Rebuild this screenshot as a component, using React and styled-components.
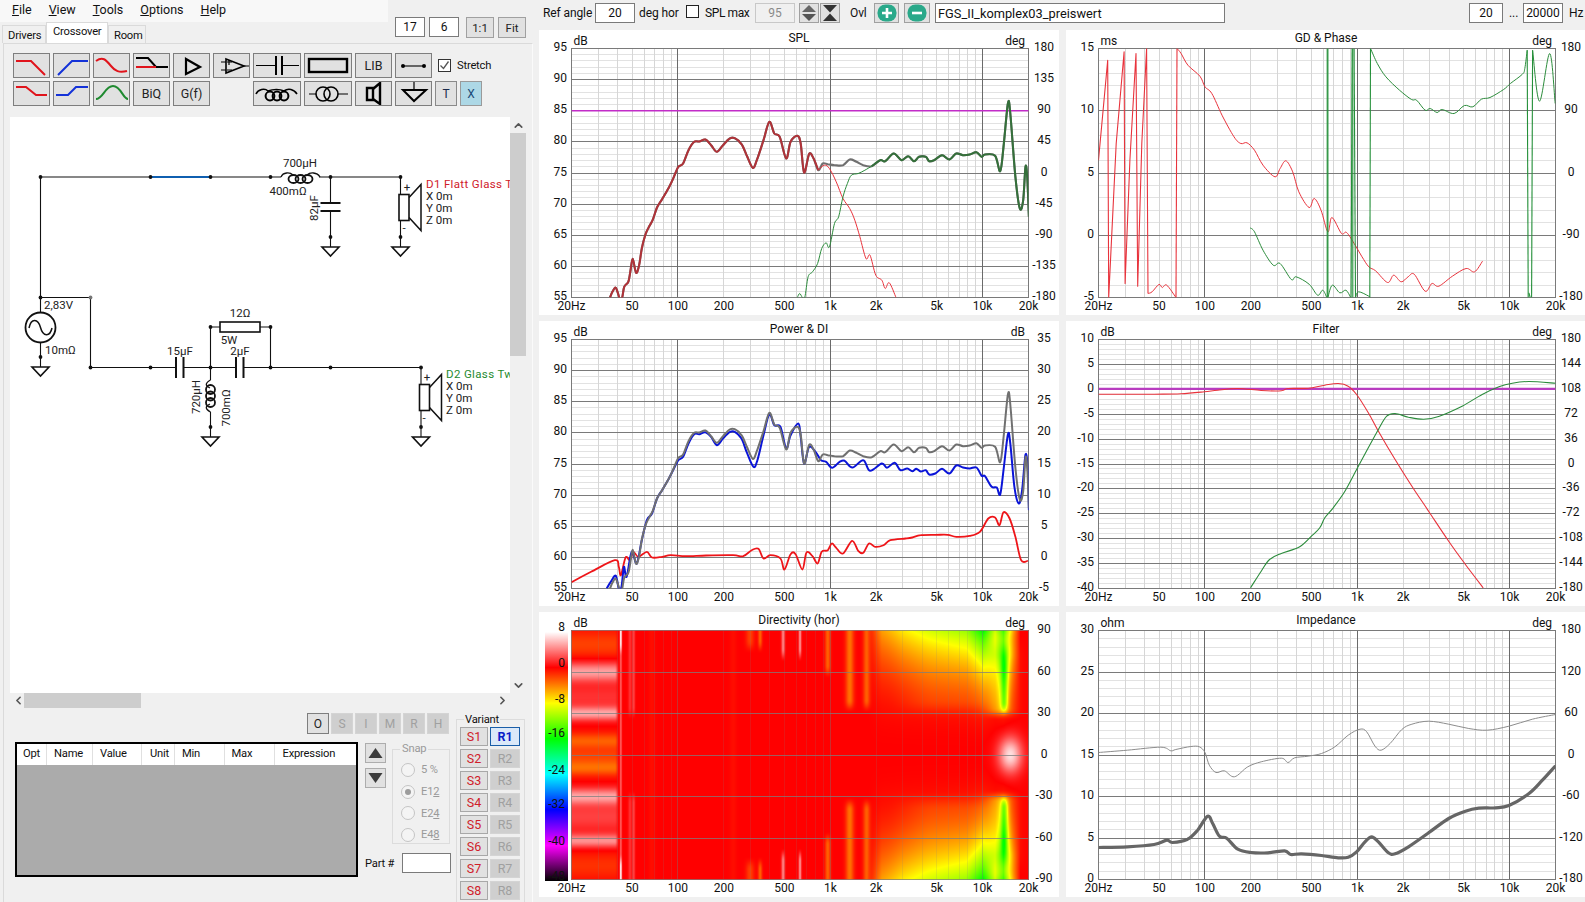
import React, { useEffect, useRef } from "react";
import styled, { createGlobalStyle } from "styled-components";
import { ChevronUp, ChevronDown, ChevronLeft, ChevronRight } from "lucide-react";

const FONT = `Roboto, "Liberation Sans", sans-serif`;

const Global = createGlobalStyle`
  html, body { margin: 0; padding: 0; background: #f0f0f0; }
  body { font-family: ${FONT}; font-size: 12px; color: #111; }
  * { box-sizing: border-box; }
`;

const Page = styled.div`
  width: 1585px; height: 902px; display: flex; overflow: hidden; background: #f0f0f0;
`;

/* ---------- left pane ---------- */
const LeftPane = styled.div`
  width: 533px; flex: none; display: flex; flex-direction: column; height: 902px;
`;
const Header = styled.div`
  height: 43px; display: flex; flex: none;
`;
const HeaderLeft = styled.div`
  width: 395px; flex: none; display: flex; flex-direction: column;
`;
const MenuBar = styled.div`
  width: 388px; height: 22px; background: #f8f8f8; display: flex; align-items: center; padding-left: 12px; gap: 17px; padding-bottom: 4px;
`;
const MenuItem = styled.span`
  font-size: 12.5px; color: #111; & u { text-decoration: underline; }
`;
const Tabs = styled.div`
  display: flex; align-items: flex-end; height: 21px; padding-left: 2px;
`;
const Tab = styled.div`
  height: ${(p) => (p.$active ? "21px" : "18px")};
  padding: ${(p) => (p.$active ? "2px 6px 0" : "3px 5px 0")};
  width: ${(p) => p.$w}px;
  background: ${(p) => (p.$active ? "#fff" : "#f0f0f0")};
  border: 1px solid #dadada; border-bottom: none; font-size: 11.2px; letter-spacing: -0.2px; white-space: nowrap;
`;
const ZoomTools = styled.div`
  display: flex; padding-top: 17px; gap: 4px; align-items: flex-start;
`;
const Box = styled.div`
  width: ${(p) => p.$w}px; height: ${(p) => p.$h || 20}px; background: ${(p) => (p.$dim ? "#f0f0f0" : "#fff")};
  border: 1px solid ${(p) => (p.$dim ? "#c8c8c8" : "#7a7a7a")}; display: flex; align-items: center;
  justify-content: ${(p) => (p.$left ? "flex-start" : "center")}; padding-left: ${(p) => (p.$left ? 2 : 0)}px;
  color: ${(p) => (p.$dim ? "#8a8a8a" : "#111")}; font-size: ${(p) => p.$fs || 12}px; flex: none; white-space: nowrap; overflow: hidden;
`;
const SmallBtn = styled.button`
  width: ${(p) => p.$w}px; height: ${(p) => p.$h || 21}px; padding: 0; background: #e1e1e1; border: 1px solid #a0a0a0; margin-left: ${(p) => p.$ml || 0}px;
  font: 11.5px ${FONT}; color: #222; flex: none; display: flex; align-items: center; justify-content: center;
`;
const TabPage = styled.div`
  flex: 1; margin-left: 3px; border: 1px solid #dadada; border-right: 1px solid #fafafa; border-bottom: none; display: flex; flex-direction: column; min-height: 0;
  font-size: 11.2px; letter-spacing: -0.2px;
`;
const Toolbar = styled.div`
  display: grid; grid-template-columns: repeat(6, 37px) 48px 48px 37px 37px auto; grid-auto-rows: 25px; gap: 3px;
  padding: 9px 0 0 9px; flex: none; height: 73px;
`;
const ToolBtn = styled.button`
  grid-column: ${(p) => p.$col || "auto"};
  padding: 0; margin: 0; background: #e1e1e1; border: 1px solid #7e7e7e; display: flex; align-items: center; justify-content: center;
  font: 12.5px ${FONT}; color: #222;
  & svg { display: block; }
`;
const StretchCell = styled.label`
  display: flex; align-items: center; gap: 6px; padding-left: 3px;
`;
const CheckBox = styled.span`
  width: 13px; height: 13px; background: #fff; border: 1px solid #333; display: inline-flex; align-items: center; justify-content: center; flex: none;
`;
const PairCell = styled.div`
  display: flex; gap: 3px;
`;
const TinyBtn = styled.button`
  width: 22px; height: 25px; padding: 0; border: 1px solid ${(p) => (p.$on ? "#9a9a9a" : "#8a8a8a")}; background: ${(p) => (p.$on ? "#add8e6" : "#e1e1e1")};
  font: 12px ${FONT}; color: ${(p) => (p.$on ? "#1a4a78" : "#1a2a4a")};
`;
const CanvasArea = styled.div`
  display: flex; margin: 0 0 0 6px; height: 576px; flex: none; margin-top: 0;
`;
const Sheet = styled.div`
  width: 500px; height: 576px; background: #fff; overflow: hidden; flex: none;
  & svg { display: block; }
`;
const VBar = styled.div`
  width: 16px; height: 576px; display: flex; flex-direction: column; align-items: center; color: #555;
`;
const ArrowCell = styled.div`
  height: 16px; width: 16px; flex: none; display: flex; align-items: center; justify-content: center; color: #555;
`;
const VThumb = styled.div`
  width: 16px; height: 223px; background: #cdcdcd; flex: none;
`;
const VRest = styled.div`flex: 1;`;
const HBar = styled.div`
  height: 15px; display: flex; align-items: center; width: 500px; margin-left: 6px; flex: none;
`;
const HThumb = styled.div`
  width: 117px; height: 15px; background: #cdcdcd; flex: none; margin-left: -2px;
`;
const Lower = styled.div`
  display: flex; flex: 1; padding-left: 11px; min-height: 0; position: relative;
`;
const LowerMain = styled.div`
  width: 441px; flex: none; display: flex; flex-direction: column;
`;
const ModeRow = styled.div`
  display: flex; justify-content: flex-end; gap: 2px; padding-top: 5px; height: 34px; padding-right: 7px;
`;
const ModeBtn = styled.button`
  width: 22px; height: 21px; padding: 0; background: ${(p) => (p.$on ? "#e1e1e1" : "#cfcfcf")};
  border: 1px solid ${(p) => (p.$on ? "#7e7e7e" : "#d4d4d4")}; font: 12px ${FONT}; color: ${(p) => (p.$on ? "#222" : "#a0a0a0")};
`;
const TableRow = styled.div`
  display: flex; gap: 7px;
`;
const PartsTable = styled.div`
  width: 343px; height: 135px; border: 2px solid #000; background: #ababab; flex: none;
`;
const TableHead = styled.div`
  height: 21px; background: #fff; display: grid; grid-template-columns: 30px 46px 49px 33px 49.5px 50px 1fr;
`;
const HeadCell = styled.div`
  border-right: 1px solid ${(p) => (p.$last ? "transparent" : "#e0e0e0")}; padding: 3px 0 0 ${(p) => p.$pad}px; white-space: nowrap;
`;
const SideCol = styled.div`
  width: 85px; flex: none; display: flex; flex-direction: column;
`;
const SideTop = styled.div`
  display: flex; gap: 6px;
`;
const ArrowCol = styled.div`
  display: flex; flex-direction: column; gap: 5px; width: 21px; padding-top: 1px;
`;
const ArrowBtn = styled.button`
  width: 21px; height: 20px; padding: 0; background: #e1e1e1; border: 1px solid #adadad; display: flex; align-items: center; justify-content: center;
`;
const SnapGroup = styled.fieldset`
  width: 58px; height: 102px; margin: 0; padding: 3px 0 0 8px; border: 1px solid #dcdcdc; min-width: 0;
  & legend { color: #9a9a9a; padding: 0 2px; margin-left: -1px; line-height: 14px; }
`;
const RadioRow = styled.div`
  display: flex; align-items: center; gap: 6px; height: 21.7px; color: #9a9a9a;
`;
const Radio = styled.span`
  width: 14px; height: 14px; border-radius: 50%; border: 1px solid #c4c4c4; background: #f4f4f4; display: flex; align-items: center; justify-content: center; flex: none;
  &::after { content: ""; width: 6px; height: 6px; border-radius: 50%; background: ${(p) => (p.$on ? "#9c9c9c" : "transparent")}; }
`;
const PartRow = styled.div`
  display: flex; align-items: center; gap: 8px; margin-top: 9px; white-space: nowrap; justify-content: space-between;
`;
const VariantGroup = styled.fieldset`
  width: 69px; height: 200px; margin: 5px 0 0 0; padding: 0 4px 0 3px; border: 1px solid #dcdcdc; flex: none; min-width: 0;
  & legend { color: #111; padding: 0 1px; margin-left: 4px; line-height: 13px; }
`;
const VariantGrid = styled.div`
  display: grid; grid-template-columns: 28px 30px; gap: 3px 2px; grid-auto-rows: 19px; margin-top: 1px;
`;
const VarBtn = styled.button`
  padding: 0; font: ${(p) => (p.$sel ? "700" : "400")} 12.5px ${FONT};
  color: ${(p) => (p.$kind === "s" ? "#d0202a" : p.$sel ? "#0a1ec8" : "#a0a0a0")};
  background: ${(p) => (p.$sel ? "#dbe9f9" : p.$kind === "s" ? "#e1e1e1" : "#cfcfcf")};
  border: 1px solid ${(p) => (p.$sel ? "#1a5ea8" : p.$kind === "s" ? "#a8a8a8" : "#d4d4d4")};
`;

/* ---------- right pane ---------- */
const RightPane = styled.div`
  flex: 1; display: flex; flex-direction: column; min-width: 0;
`;
const TopBar = styled.div`
  height: 30px; display: flex; align-items: flex-start; padding: 3px 0 0 10px; flex: none;
`;
const BarLabel = styled.span`
  line-height: 20px; margin-left: ${(p) => p.$ml || 0}px; font-size: 12px; white-space: nowrap; flex: none; width: ${(p) => (p.$w !== undefined ? p.$w + "px" : "auto")};
  letter-spacing: ${(p) => (p.$tight ? "-0.4px" : "-0.1px")};
`;
const BarCheck = styled(CheckBox)`
  margin: 2px 6px 0 0; border-color: #222;
`;
const GridWrap = styled.div`
  display: grid; grid-template-columns: 520px 519px; grid-auto-rows: 285px; column-gap: 7px; row-gap: 6px; margin-left: 6px;
`;
const Panel = styled.div`
  position: relative; background: #fff; width: 100%; height: 285px; overflow: hidden;
  & > svg { display: block; }
`;
const HeatCanvas = styled.canvas`
  position: absolute; left: 32px; top: 18px; width: 458px; height: 250px; display: block;
`;
const AxisText = styled.text`
  font: 12px ${FONT}; fill: #111;
`;
const SchText = styled.text`
  font: 11.5px ${FONT}; fill: ${(p) => p.$color || "#222"}; letter-spacing: ${(p) => (p.$color ? "0.35px" : "0")};
`;

/* ---------- curves ---------- */
const Z4 = (z) => z.map(([x, y]) => [(x - 122) / 2.958, (y - 145) / 3]);
const Z5 = (z) => z.map(([x, y]) => [(x - 143) / 2.93, (y - 145) / 3]);
const Z7 = (z) => z.map(([x, y]) => [(x - 122) / 2.958, (y - 88) / 3]);
const Z8 = (z) => z.map(([x, y]) => [(x - 114) / 2.987, (y - 65) / 3]);
const Z9 = (z) => z.map(([x, y]) => [(x - 114) / 2.987, (y - 61) / 3]);

const smooth = (p) => {
  let d = `M${p[0][0].toFixed(1)} ${p[0][1].toFixed(1)}`;
  for (let i = 0; i < p.length - 1; i++) {
    const a = p[Math.max(i - 1, 0)], b = p[i], c = p[i + 1], e = p[Math.min(i + 2, p.length - 1)];
    const c1 = [b[0] + (c[0] - a[0]) / 6, b[1] + (c[1] - a[1]) / 6];
    const c2 = [c[0] - (e[0] - b[0]) / 6, c[1] - (e[1] - b[1]) / 6];
    d += `C${c1[0].toFixed(1)} ${c1[1].toFixed(1)} ${c2[0].toFixed(1)} ${c2[1].toFixed(1)} ${c[0].toFixed(1)} ${c[1].toFixed(1)}`;
  }
  return d;
};
const poly = (p) => "M" + p.map(([x, y]) => `${x.toFixed(1)} ${y.toFixed(1)}`).join("L");

const SUM = [[236,892],[243,875],[252,862],[258,875],[266,900],[272,892],[278,860],[290,845],[296,815],[303,776],[313,818],[322,795],[330,745],[340,705],[350,682],[362,660],[375,622],[390,597],[410,562],[425,530],[438,500],[452,490],[468,450],[485,425],[500,424],[518,418],[535,435],[552,455],[570,435],[590,415],[605,414],[625,432],[640,465],[658,503],[670,480],[690,420],[707,365],[722,400],[738,410],[757,475],[770,425],[790,407],[800,430],[810,517],[825,461],[838,475],[852,510],[865,490],[880,492],[900,495],[925,495],[945,478],[965,485],[985,495],[1010,498],[1035,480],[1050,483],[1075,460],[1098,480],[1118,468],[1135,483],[1150,470],[1170,470],[1180,483],[1195,480],[1218,465],[1240,478],[1260,460],[1280,465],[1300,463],[1320,456],[1335,470],[1345,463],[1375,467],[1390,513],[1400,440],[1413,310],[1420,340],[1435,530],[1448,625],[1458,600],[1465,500],[1470,530],[1475,650]];
const SUM_LOW = SUM.filter(([x]) => x <= 852);
const SUM_HIGH = SUM.filter(([x]) => x >= 1010);
const RED_THIN = [[852,510],[870,495],[885,505],[905,545],[925,595],[945,625],[960,660],[975,710],[993,775],[1005,765],[1022,825],[1040,840],[1050,865],[1062,848],[1082,892]];
const GREEN_THIN = [[790,892],[797,880],[805,892],[812,892],[822,830],[835,815],[850,790],[862,745],[875,728],[885,740],[900,670],[912,650],[925,590],[938,550],[950,525],[970,520],[990,510],[1010,498]];
const BLUE = [[226,835],[240,812],[253,797],[262,835],[270,830],[277,770],[285,800],[300,725],[315,760],[330,690],[345,630],[360,610],[375,565],[390,540],[410,505],[425,475],[438,450],[452,440],[468,400],[485,372],[500,372],[518,366],[535,380],[552,405],[570,385],[590,366],[605,365],[625,385],[640,425],[660,470],[672,450],[690,375],[707,312],[722,345],[740,350],[757,415],[770,375],[793,340],[800,380],[810,460],[825,410],[845,427],[860,450],[875,455],[893,473],[915,455],[930,452],[953,472],[985,450],[1005,482],[1040,460],[1055,473],[1078,458],[1095,480],[1115,475],[1130,483],[1142,476],[1155,484],[1170,480],[1180,493],[1198,490],[1218,476],[1240,490],[1260,466],[1280,472],[1300,475],[1320,472],[1335,497],[1345,498],[1365,530],[1380,532],[1390,553],[1400,480],[1413,373],[1420,400],[1432,530],[1445,580],[1455,540],[1465,433],[1472,480],[1475,600]];
const DI = [[122,816],[180,785],[250,750],[262,770],[268,795],[282,742],[295,750],[305,725],[320,740],[345,725],[360,742],[390,740],[415,735],[460,738],[520,736],[600,735],[630,738],[655,720],[675,716],[690,745],[710,735],[740,745],[752,778],[770,732],[785,732],[805,778],[817,727],[835,738],[850,760],[862,725],[880,720],[892,700],[905,713],[925,730],[952,692],[970,722],[985,728],[1002,700],[1020,710],[1045,705],[1065,690],[1110,685],[1130,682],[1155,675],[1200,674],[1235,674],[1260,680],[1300,677],[1330,665],[1355,625],[1375,622],[1388,645],[1400,606],[1418,625],[1435,680],[1452,750],[1472,752]];
const GD_RED_A = [[143,480],[170,180],[173,892],[195,430],[218,155],[221,850],[235,480],[253,160],[258,858],[270,430],[284,145],[288,880]];
const GD_RED_B = [[288,880],[300,875],[320,853],[330,862],[343,855],[370,892]];
const GD_RED_C = [[370,892],[373,145]];
const GD_RED_D = [[373,145],[385,160],[405,195],[440,228],[455,260],[475,280],[505,345],[540,410],[560,430],[578,428],[600,450],[625,495],[660,530],[675,505],[692,482],[712,515],[730,575],[760,622],[775,595],[795,630],[815,695],[827,652],[855,700],[870,697],[895,735],[915,770],[935,800],[955,812],[990,847],[1008,825],[1030,845],[1050,830],[1068,822],[1100,873],[1120,850],[1140,858],[1180,828],[1220,805],[1245,815],[1268,783]];
const GD_GREEN_A = [[587,683],[600,695],[625,750],[655,795],[675,790],[708,838],[722,830],[760,852],[785,885],[800,870],[812,892]];
const GD_GREEN_B = [[815,892],[828,855],[850,878],[868,870],[882,892]];
const GD_GREEN_C = [[896,892],[905,875],[935,888],[938,892]];
const GD_GREEN_D = [[940,145],[960,190],[985,230],[1025,270],[1060,298],[1075,300],[1100,330],[1115,325],[1135,337],[1150,328],[1185,340],[1215,316],[1240,320],[1265,297],[1290,292],[1330,268],[1350,250],[1385,222],[1392,205],[1399,150]];
const GD_GREEN_E = [[1415,150],[1435,303],[1465,160],[1481,310]];
const SPIKES = [[[813,892],[813,145]],[[815,145],[815,892]],[[883,892],[886,145]],[[892,145],[896,892]],[[888,145],[888,892]],[[938,892],[940,145]],[[1399,150],[1402,892]],[[1412,892],[1415,150]],[[1404,878],[1408,892]]];
const F_RED = [[114,229],[280,229],[360,228],[430,222],[470,217],[530,212],[600,218],[660,219],[680,212],[740,211],[790,202],[830,197],[860,205],[885,230],[920,285],[950,340],[1000,425],[1050,505],[1100,580],[1160,670],[1210,740],[1263,810]];
const F_GREEN = [[568,810],[600,760],[625,725],[660,707],[715,687],[750,655],[775,630],[790,600],[815,570],[850,520],[885,455],[920,390],[950,335],[975,295],[1000,287],[1040,298],[1085,304],[1130,296],[1200,265],[1260,230],[1310,207],[1350,196],[1400,191],[1479,196]];
const IMP_THIN = [[114,427],[200,420],[300,411],[330,422],[345,418],[390,409],[415,410],[432,427],[445,465],[465,487],[490,482],[520,500],[560,470],[600,455],[660,444],[680,457],[700,443],[740,438],[780,430],[820,410],[860,375],[895,357],[915,365],[940,408],[958,420],[985,400],[1020,358],[1050,342],[1100,333],[1160,342],[1220,355],[1275,360],[1340,348],[1410,327],[1479,313]];
const IMP_THICK = [[114,712],[200,710],[280,703],[318,690],[335,697],[380,687],[410,660],[440,618],[455,640],[475,678],[497,684],[530,717],[570,727],[620,728],[670,722],[688,733],[720,731],[780,736],[830,743],[860,741],[885,725],[910,695],[930,680],[950,695],[980,728],[1000,731],[1040,710],[1100,668],[1160,625],[1210,603],[1250,594],[1300,593],[1340,586],[1400,550],[1440,510],[1479,467]];

const RED = "#e8333c", GREEN = "#2c8c3c";
const splCurves = [
  { d: smooth(Z4(SUM)), c: "#707070", w: 2.1 },
  { d: smooth(Z4(SUM_LOW)), c: "#b03238", w: 2 },
  { d: smooth(Z4(SUM_HIGH)), c: "#34703a", w: 2 },
  { d: smooth(Z4(RED_THIN)), c: RED, w: 1 },
  { d: smooth(Z4(GREEN_THIN)), c: GREEN, w: 1 },
];
const powerCurves = [
  { d: smooth(Z7(DI)), c: "#ee1519", w: 1.8 },
  { d: smooth(Z7(BLUE)), c: "#0a14d8", w: 2 },
  { d: smooth(Z4(SUM)), c: "#707070", w: 2 },
];
const gdCurves = [
  { d: poly(Z5(GD_RED_A)), c: RED, w: 1.1 },
  { d: smooth(Z5(GD_RED_B)), c: RED, w: 1 },
  { d: poly(Z5(GD_RED_C)), c: RED, w: 1.1 },
  { d: smooth(Z5(GD_RED_D)), c: RED, w: 1 },
  { d: smooth(Z5(GD_GREEN_A)), c: GREEN, w: 1 },
  { d: smooth(Z5(GD_GREEN_B)), c: GREEN, w: 1 },
  { d: smooth(Z5(GD_GREEN_C)), c: GREEN, w: 1 },
  { d: smooth(Z5(GD_GREEN_D)), c: GREEN, w: 1 },
  { d: smooth(Z5(GD_GREEN_E)), c: GREEN, w: 1 },
  ...SPIKES.map((s) => ({ d: poly(Z5(s)), c: "#25903a", w: 1.1 })),
];
const filterCurves = [
  { d: poly(Z8([[114,213],[1479,213]])), c: "#b83cc0", w: 2.2 },
  { d: smooth(Z8(F_RED)), c: RED, w: 1.1 },
  { d: smooth(Z8(F_GREEN)), c: GREEN, w: 1.1 },
];
const impCurves = [
  { d: smooth(Z9(IMP_THIN)), c: "#8c8c8c", w: 1 },
  { d: smooth(Z9(IMP_THICK)), c: "#666", w: 3.2 },
];
const splLine = [{ d: poly(Z4([[122,332],[1475,332]])), c: "#c22cc8", w: 1.4 }];

const PW = 457, PH = 249, PX = 32.5, PY = 18.5;
const fx = (f) => ((Math.log10(f) - Math.log10(20)) / 3) * PW;
const MINOR_F = [30,40,50,60,70,80,90,200,300,400,500,600,700,800,900,2000,3000,4000,5000,6000,7000,8000,9000];
const MAJOR_F = [100,1000,10000];
const XT = [["20Hz",20],["50",50],["100",100],["200",200],["500",500],["1k",1000],["2k",2000],["5k",5000],["10k",10000],["20k",20000]];

function PlotGrid({ divs }) {
  const minor = [];
  const major = [];
  const n = divs * 5;
  for (let i = 1; i < n; i++) {
    const y = Math.round((i / n) * PH);
    if (i % 5 === 0) major.push(y); else minor.push(y);
  }
  return (
    <g shapeRendering="crispEdges">
      {minor.map((y) => <line key={y} x1={0} x2={PW} y1={y} y2={y} stroke="#e2e2e2" />)}
      {MINOR_F.map((f) => <line key={f} x1={Math.round(fx(f))} x2={Math.round(fx(f))} y1={0} y2={PH} stroke="#d6d6d6" />)}
      {major.map((y) => <line key={y} x1={0} x2={PW} y1={y} y2={y} stroke="#7a7a7a" />)}
      {MAJOR_F.map((f) => <line key={f} x1={Math.round(fx(f))} x2={Math.round(fx(f))} y1={0} y2={PH} stroke="#6a6a6a" />)}
      <rect x={0} y={0} width={PW} height={PH} fill="none" stroke="#7a7a7a" />
    </g>
  );
}

function Axes({ title, lu, ru, left, right }) {
  return (
    <>
      <AxisText x={260} y={12} textAnchor="middle">{title}</AxisText>
      <AxisText x={34.5} y={15}>{lu}</AxisText>
      <AxisText x={486} y={15} textAnchor="end">{ru}</AxisText>
      {left.map((t, i) => (
        <AxisText key={t} x={28} y={PY + (i / (left.length - 1)) * PH + 2.5} textAnchor="end">{t}</AxisText>
      ))}
      {right.map((t, i) => (
        <AxisText key={t} x={505} y={PY + (i / (right.length - 1)) * PH + 2.5} textAnchor="middle">{t}</AxisText>
      ))}
      {XT.map(([t, f]) => (
        <AxisText key={t} x={PX + fx(f)} y={280} textAnchor="middle">{t}</AxisText>
      ))}
    </>
  );
}

function Chart({ id, title, lu, ru, left, right, curves, overlay }) {
  return (
    <Panel>
      <svg width="520" height="285">
        <defs><clipPath id={id}><rect x={0} y={0} width={PW} height={PH} /></clipPath></defs>
        <Axes title={title} lu={lu} ru={ru} left={left} right={right} />
        <g transform={`translate(${PX} ${PY})`}>
          <PlotGrid divs={left.length - 1} />
          <g clipPath={`url(#${id})`} fill="none" strokeLinejoin="round">
            {(overlay || []).map((c, i) => <path key={"o" + i} d={c.d} stroke={c.c} strokeWidth={c.w} />)}
            {curves.map((c, i) => <path key={i} d={c.d} stroke={c.c} strokeWidth={c.w} />)}
          </g>
        </g>
      </svg>
    </Panel>
  );
}

/* ---------- heat map ---------- */
const sstep = (a, b, x) => { const t = Math.min(1, Math.max(0, (x - a) / (b - a))); return t * t * (3 - 2 * t); };
const gs = (x, c, s) => Math.exp(-(((x - c) / s) ** 2));
const BANDS = [[60,7,5],[42,9,1.5],[30,5,5],[10,6,-3],[0,5,-1.5],[-9,6,-3.5],[-30,6,5],[-45,10,2],[-62,5,4.5],[-80,10,-1.5],[80,10,-2]];
const STRIPES = [[268,3,3,0],[268,3,5,76],[295,5,1.5,30],[306,4,2,30],[650,12,-2,78],[680,6,-3,78],[880,8,-3,60],[945,12,-3.5,35],[995,10,-3,35],[748,5,4,72],[798,4,4.5,72],[360,10,-0.4,0],[600,10,-0.4,0]];
const KP = [[1000,0],[1040,5],[1100,7],[1200,8.5],[1290,10],[1340,15],[1375,9],[1400,14],[1430,5],[1450,0],[1475,0]];
const kAt = (x) => {
  if (x <= KP[0][0]) return 0;
  for (let i = 0; i < KP.length - 1; i++) {
    if (x <= KP[i + 1][0]) { const t = (x - KP[i][0]) / (KP[i + 1][0] - KP[i][0]); return KP[i][1] + t * (KP[i + 1][1] - KP[i][1]); }
  }
  return 0;
};
const heat = (zx, a) => {
  const ab = Math.abs(a);
  let L = 0;
  const low = 1 - sstep(250, 264, zx);
  if (low > 0) { let b = 0; for (const [c, w, m] of BANDS) b += m * gs(a, c, w); L += low * b; }
  for (const [c, w, m, minA] of STRIPES) {
    const wt = minA === 0 ? 1 : sstep(minA - 5, minA + 5, ab);
    L += m * gs(zx, c, w) * wt;
  }
  L -= kAt(zx) * Math.pow(ab / 90, 2.5);
  L -= 6.5 * gs(zx, 1402, 11) * sstep(27, 38, ab) * (1 - sstep(60, 85, ab));
  L -= 4.5 * gs(zx, 1392, 38) * sstep(25, 34, ab) * (1 - sstep(70, 88, ab));
  L -= 1.2 * sstep(1050, 1200, zx) * (1 - sstep(1330, 1420, zx)) * sstep(26, 40, ab);
  L += 7 * gs(zx, 1420, 35) * gs(a, 0, 13);
  return L;
};
const CMAP = [[8,255,255,255],[0,255,0,0],[-8,255,255,0],[-16,0,255,0],[-24,0,255,255],[-32,0,0,255],[-40,255,0,255],[-48,0,0,0]];
const colorOf = (L) => {
  const v = Math.max(-48, Math.min(8, L));
  for (let i = 0; i < CMAP.length - 1; i++) {
    const h = CMAP[i], l = CMAP[i + 1];
    if (v <= h[0] && v >= l[0]) {
      const t = (h[0] - v) / (h[0] - l[0]);
      return [h[1] + t * (l[1] - h[1]), h[2] + t * (l[2] - h[2]), h[3] + t * (l[3] - h[3])];
    }
  }
  return [255, 0, 0];
};

function HeatMap() {
  const ref = useRef(null);
  useEffect(() => {
    const ctx = ref.current.getContext("2d");
    const w = 458, h = 250;
    const img = ctx.createImageData(w, h);
    for (let y = 0; y < h; y++) {
      const a = 90 - (y / (h - 1)) * 180;
      for (let x = 0; x < w; x++) {
        const zx = 122 + x * 2.958;
        const [r, g, b] = colorOf(heat(zx, a));
        const i = (y * w + x) * 4;
        img.data[i] = r; img.data[i + 1] = g; img.data[i + 2] = b; img.data[i + 3] = 255;
      }
    }
    ctx.putImageData(img, 0, 0);
    ctx.translate(0.5, 0.5);
    ctx.lineWidth = 1;
    ctx.strokeStyle = "rgba(130,130,130,0.16)";
    MINOR_F.forEach((f) => { const x = Math.round(fx(f)); ctx.beginPath(); ctx.moveTo(x, 0); ctx.lineTo(x, PH); ctx.stroke(); });
    ctx.strokeStyle = "rgba(120,120,120,0.4)";
    MAJOR_F.forEach((f) => { const x = Math.round(fx(f)); ctx.beginPath(); ctx.moveTo(x, 0); ctx.lineTo(x, PH); ctx.stroke(); });
    ctx.strokeStyle = "rgba(125,125,125,0.75)";
    for (let i = 1; i < 6; i++) { const y = Math.round((i / 6) * PH); ctx.beginPath(); ctx.moveTo(0, y); ctx.lineTo(PW, y); ctx.stroke(); }
    ctx.strokeRect(0, 0, PW, PH);
  }, []);
  return <HeatCanvas ref={ref} width={458} height={250} />;
}
const SCALE = [["8",15],["0",51],["-8",87],["-16",121],["-24",158],["-32",192],["-40",229],["-48",264]];
function Directivity() {
  return (
    <Panel>
      <svg width="520" height="285">
        <defs>
          <linearGradient id="scale" x1="0" y1="0" x2="0" y2="1">
            {["#ffffff","#ff0000","#ffff00","#00ff00","#00ffff","#0000ff","#ff00ff","#000000"].map((c, i) => (
              <stop key={c} offset={`${(i / 7) * 100}%`} stopColor={c} />
            ))}
          </linearGradient>
        </defs>
        <Axes title="Directivity (hor)" lu="dB" ru="deg" left={[]} right={["90","60","30","0","-30","-60","-90"]} />
        <rect x={6} y={20} width={23} height={249} fill="url(#scale)" />
        {SCALE.map(([t, y]) => <AxisText key={t} x={26} y={y + 4} textAnchor="end">{t}</AxisText>)}
      </svg>
      <HeatMap />
    </Panel>
  );
}

/* ---------- schematic ---------- */
const W = "#111";
const Dot = ({ x, y, c }) => <circle cx={x} cy={y} r="1.9" fill={c || W} />;
const Ground = ({ x, y }) => (
  <g fill="none" stroke={W} strokeWidth="1.6">
    <path d={`M${x} ${y - 9}V${y}`} strokeWidth="1.1" />
    <path d={`M${x - 8.5} ${y}H${x + 8.5}L${x} ${y + 9}Z`} fill="#fff" />
  </g>
);
const Speaker = ({ x, y }) => (
  <g fill="none" stroke={W}>
    <rect x={x - 1.5} y={y} width={10} height={26} strokeWidth="1.6" fill="#fff" />
    <path d={`M${x + 8.5} ${y + 3}L${x + 20.5} ${y - 10}V${y + 36}L${x + 8.5} ${y + 23}`} strokeWidth="1.5" />
  </g>
);
function Schematic() {
  return (
    <svg width="500" height="576" viewBox="10 117 500 576">
      <g fill="none" stroke={W} strokeWidth="1.1">
        <path d="M40.5 177H150M210 177H281" />
        <path d="M319 177H400.5V194M330.5 177V203M330.5 211V237" />
        <path d="M400.5 220V237M40.5 177V313M40.5 342V357M40.5 297.5H90.5V367.5H176M184 367.5H236M244 367.5H421V384M421 410V427" />
        <path d="M210.5 367.5V380M210.5 412V427M210.5 367.5V327H220M260 327H270.5V367.5" />
      </g>
      <path d="M150 177H210" stroke="#0f5fb0" strokeWidth="2" />
      <Dot x={40.5} y={177} /><Dot x={150.5} y={177} /><Dot x={210.5} y={177} /><Dot x={270.5} y={177} /><Dot x={330.5} y={177} /><Dot x={400.5} y={177} />
      <Dot x={330.5} y={237} /><Dot x={400.5} y={237} /><Dot x={40.5} y={297.5} /><Dot x={90.5} y={297.5} c="#777" /><Dot x={90.5} y={367.5} /><Dot x={150.5} y={367.5} />
      <Dot x={210.5} y={367.5} /><Dot x={270.5} y={367.5} /><Dot x={330.5} y={367.5} /><Dot x={421} y={367.5} /><Dot x={210.5} y={327} /><Dot x={270.5} y={327} />
      <Dot x={40.5} y={357} /><Dot x={210.5} y={427} /><Dot x={421} y={427} />
      <g fill="none" stroke={W} strokeWidth="1.8">
        <path d="M281 177C283 172 290 172 293 175M307 175C310 172 317 172 320 177" strokeWidth="1.3" />
        <ellipse cx="293.5" cy="179" rx="5" ry="4" />
        <ellipse cx="300.5" cy="179" rx="5" ry="4" />
        <ellipse cx="307.5" cy="179" rx="5" ry="4" />
        <path d="M320.5 203H340.5M320.5 211H340.5" strokeWidth="2" />
        <path d="M176 357V378M183.5 357V378M236 357V378M243.5 357V378" strokeWidth="2" />
        <rect x="220" y="322" width="40" height="10" strokeWidth="1.6" />
        <circle cx="40.5" cy="327.5" r="15" strokeWidth="1.8" />
        <path d="M29 328C31 318 38 318 40.5 327.5C43 337 50 337 52 328" strokeWidth="1.5" />
        <path d="M210.5 380C205 383 205 386 210 388M210 404C205 406 205 409 210.5 412" strokeWidth="1.3" />
        <ellipse cx="210.5" cy="389.5" rx="4.5" ry="4.5" />
        <ellipse cx="210.5" cy="396" rx="4.5" ry="4.5" />
        <ellipse cx="210.5" cy="402.5" rx="4.5" ry="4.5" />
      </g>
      <Ground x={330.5} y={247} /><Ground x={400.5} y={247} /><Ground x={40.5} y={367} /><Ground x={210.5} y={437} /><Ground x={421} y={437} />
      <Speaker x={400.5} y={194.5} /><Speaker x={421} y={384.5} />

      <SchText x={300} y={167} textAnchor="middle">700µH</SchText>
      <SchText x={288} y={195} textAnchor="middle">400mΩ</SchText>
      <SchText transform="translate(318 208) rotate(-90)" textAnchor="middle">82µF</SchText>
      <SchText x={407} y={191} textAnchor="middle">+</SchText>
      <SchText x={404} y={232} textAnchor="middle">-</SchText>
      <SchText x={426} y={188} $color="#d0202a">D1 Flatt Glass T</SchText>
      <SchText x={426} y={200}>X 0m</SchText>
      <SchText x={426} y={212}>Y 0m</SchText>
      <SchText x={426} y={224}>Z 0m</SchText>
      <SchText x={44} y={309}>2,83V</SchText>
      <SchText x={45} y={354}>10mΩ</SchText>
      <SchText x={240} y={317} textAnchor="middle">12Ω</SchText>
      <SchText x={229} y={344} textAnchor="middle">5W</SchText>
      <SchText x={180} y={355} textAnchor="middle">15µF</SchText>
      <SchText x={240} y={355} textAnchor="middle">2µF</SchText>
      <SchText transform="translate(200 397) rotate(-90)" textAnchor="middle">720µH</SchText>
      <SchText transform="translate(230 408) rotate(-90)" textAnchor="middle">700mΩ</SchText>
      <SchText x={427} y={381} textAnchor="middle">+</SchText>
      <SchText x={424} y={422} textAnchor="middle">-</SchText>
      <SchText x={446} y={378} $color="#1f8a30">D2 Glass Tw</SchText>
      <SchText x={446} y={390}>X 0m</SchText>
      <SchText x={446} y={402}>Y 0m</SchText>
      <SchText x={446} y={414}>Z 0m</SchText>
    </svg>
  );
}

/* ---------- toolbar icons ---------- */
const Ico = ({ w = 35, h = 23, children }) => (
  <svg width={w} height={h} viewBox={`1 1 ${w} ${h}`} fill="none" strokeWidth="2" strokeLinejoin="miter">{children}</svg>
);
const R = "#e0141c", B = "#1432d8", K = "#000", G = "#1f8a30";
const IconLP = () => <Ico><path d="M3 8H18L32 22" stroke={R} /></Ico>;
const IconHP = () => <Ico><path d="M5 22L19 8H35" stroke={B} /></Ico>;
const IconBell = () => <Ico><path d="M3 8C10 3 13 7 18 13C22 18 26 20 34 18" stroke={R} /></Ico>;
const IconAP = () => <Ico><path d="M3 5H15L23 14H35" stroke={K} /><path d="M3 14H23" stroke={R} /></Ico>;
const IconTri = () => <Ico><path d="M13 6L27 14L13 21Z" stroke={K} strokeWidth="2.2" /></Ico>;
const IconAmp = () => (
  <Ico>
    <path d="M13 6L31 13L13 20Z" stroke={K} strokeWidth="1.6" />
    <path d="M8 9H13M8 17H13M31 13H36M16 7V12M14 9H19M14 17H19" stroke={K} strokeWidth="1.2" />
  </Ico>
);
const IconLS = () => <Ico><path d="M3 6H13L23 14H34" stroke={R} /></Ico>;
const IconHS = () => <Ico><path d="M3 14H15L23 6H35" stroke={B} /></Ico>;
const IconPeak = () => <Ico><path d="M3 18C10 18 12 5 20 5C28 5 30 18 35 18" stroke={G} /></Ico>;
const IconCap = () => <Ico w={46}><path d="M3 12.5H23M29 12.5H46" stroke={K} strokeWidth="1.2" /><path d="M23 3V22M29 3V22" stroke={K} strokeWidth="2" /></Ico>;
const IconRes = () => <Ico w={46}><rect x="5" y="6" width="38" height="13" stroke={K} strokeWidth="2.4" /></Ico>;
const IconWire = () => <Ico><path d="M8 13H29" stroke={K} strokeWidth="1.1" /><circle cx="8" cy="13" r="2" fill={K} stroke="none" /><circle cx="29" cy="13" r="2" fill={K} stroke="none" /></Ico>;
const IconCoil = () => (
  <Ico w={46}>
    <path d="M3 13C5 8 12 7 15 10C20 8 27 8 31 10C35 7 41 8 44 13" stroke={K} strokeWidth="1.6" />
    <circle cx="17" cy="15" r="4.4" stroke={K} /><circle cx="24" cy="15" r="4.4" stroke={K} /><circle cx="31" cy="15" r="4.4" stroke={K} />
  </Ico>
);
const IconTrans = () => (
  <Ico w={46}>
    <path d="M5 13H12M34 13H44" stroke={K} strokeWidth="1.2" />
    <circle cx="19" cy="13" r="7" stroke={K} strokeWidth="1.6" /><circle cx="27" cy="13" r="7" stroke={K} strokeWidth="1.6" />
  </Ico>
);
const IconSpk = () => <Ico><path d="M12 7H18V19H12Z" stroke={K} strokeWidth="2.4" /><path d="M18 8L25 2V23L18 18" stroke={K} strokeWidth="2.4" /></Ico>;
const IconGnd = () => <Ico><path d="M19 1V9" stroke={K} strokeWidth="1.2" /><path d="M8 9H31L19 20Z" stroke={K} strokeWidth="2" /></Ico>;

const IconUpDown = () => (
  <svg width="16" height="18" viewBox="0 0 16 18"><path d="M8 1L15 8H1Z" fill="#666" /><path d="M1 10H15L8 17Z" fill="#555" /></svg>
);
const IconHour = () => (
  <svg width="16" height="18" viewBox="0 0 16 18"><path d="M1 1H15L8 8.5Z" fill="#333" /><path d="M8 9.5L15 17H1Z" fill="#333" /></svg>
);
const IconRound = ({ minus }) => (
  <svg width="22" height="18" viewBox="0 0 22 18">
    <rect x="1.5" y="0.5" width="19" height="17" rx="8" fill="#2aa98a" />
    <path d={minus ? "M6 9H16" : "M11 4V14M6 9H16"} stroke="#fff" strokeWidth="2.6" />
  </svg>
);
const Tick = () => <svg width="11" height="11" viewBox="0 0 11 11"><path d="M1.5 5.5L4.5 8.5L9.5 1.5" fill="none" stroke="#555" strokeWidth="1.3" /></svg>;
const UpTri = () => <svg width="15" height="12" viewBox="0 0 15 12"><path d="M7.5 1L14.5 11H0.5Z" fill="#3c3c3c" /></svg>;
const DownTri = () => <svg width="15" height="12" viewBox="0 0 15 12"><path d="M0.5 1H14.5L7.5 11Z" fill="#3c3c3c" /></svg>;

const COLS = [["Opt",6],["Name",7],["Value",7],["Unit",8],["Min",7],["Max",7],["Expression",8]];

export default function App() {
  return (
    <Page>
      <Global />
      <LeftPane>
        <Header>
          <HeaderLeft>
            <MenuBar>
              <MenuItem><u>F</u>ile</MenuItem>
              <MenuItem><u>V</u>iew</MenuItem>
              <MenuItem><u>T</u>ools</MenuItem>
              <MenuItem><u>O</u>ptions</MenuItem>
              <MenuItem><u>H</u>elp</MenuItem>
            </MenuBar>
            <Tabs>
              <Tab $w={44}>Drivers</Tab>
              <Tab $w={62} $active>Crossover</Tab>
              <Tab $w={38}>Room</Tab>
            </Tabs>
          </HeaderLeft>
          <ZoomTools>
            <Box $w={30}>17</Box>
            <Box $w={30}>6</Box>
            <SmallBtn $w={28} $ml={3}>1:1</SmallBtn>
            <SmallBtn $w={28}>Fit</SmallBtn>
          </ZoomTools>
        </Header>
        <TabPage>
          <Toolbar>
            <ToolBtn><IconLP /></ToolBtn><ToolBtn><IconHP /></ToolBtn><ToolBtn><IconBell /></ToolBtn><ToolBtn><IconAP /></ToolBtn>
            <ToolBtn><IconTri /></ToolBtn><ToolBtn><IconAmp /></ToolBtn><ToolBtn><IconCap /></ToolBtn><ToolBtn><IconRes /></ToolBtn>
            <ToolBtn>LIB</ToolBtn><ToolBtn><IconWire /></ToolBtn>
            <StretchCell><CheckBox><Tick /></CheckBox>Stretch</StretchCell>
            <ToolBtn><IconLS /></ToolBtn><ToolBtn><IconHS /></ToolBtn><ToolBtn><IconPeak /></ToolBtn><ToolBtn>BiQ</ToolBtn><ToolBtn>G(f)</ToolBtn>
            <ToolBtn $col="7"><IconCoil /></ToolBtn><ToolBtn><IconTrans /></ToolBtn><ToolBtn><IconSpk /></ToolBtn><ToolBtn><IconGnd /></ToolBtn>
            <PairCell><TinyBtn>T</TinyBtn><TinyBtn $on>X</TinyBtn></PairCell>
          </Toolbar>
          <CanvasArea>
            <Sheet><Schematic /></Sheet>
            <VBar>
              <ArrowCell><ChevronUp size={13} strokeWidth={3} /></ArrowCell>
              <VThumb />
              <VRest />
              <ArrowCell><ChevronDown size={13} strokeWidth={3} /></ArrowCell>
            </VBar>
          </CanvasArea>
          <HBar>
            <ArrowCell><ChevronLeft size={13} strokeWidth={3} /></ArrowCell>
            <HThumb />
            <VRest />
            <ArrowCell><ChevronRight size={13} strokeWidth={3} /></ArrowCell>
          </HBar>
          <Lower>
            <LowerMain>
              <ModeRow>
                <ModeBtn $on>O</ModeBtn><ModeBtn>S</ModeBtn><ModeBtn>I</ModeBtn><ModeBtn>M</ModeBtn><ModeBtn>R</ModeBtn><ModeBtn>H</ModeBtn>
              </ModeRow>
              <TableRow>
                <PartsTable>
                  <TableHead>
                    {COLS.map(([t, p], i) => <HeadCell key={t} $pad={p} $last={i === 6}>{t}</HeadCell>)}
                  </TableHead>
                </PartsTable>
                <SideCol>
                  <SideTop>
                    <ArrowCol>
                      <ArrowBtn><UpTri /></ArrowBtn>
                      <ArrowBtn><DownTri /></ArrowBtn>
                    </ArrowCol>
                    <SnapGroup>
                      <legend>Snap</legend>
                      <RadioRow><Radio /><span>5 %</span></RadioRow>
                      <RadioRow><Radio $on /><span>E1<u>2</u></span></RadioRow>
                      <RadioRow><Radio /><span>E2<u>4</u></span></RadioRow>
                      <RadioRow><Radio /><span>E4<u>8</u></span></RadioRow>
                    </SnapGroup>
                  </SideTop>
                  <PartRow><span>Part #</span><Box $w={49} $h={20} /></PartRow>
                </SideCol>
              </TableRow>
            </LowerMain>
            <VariantGroup>
              <legend>Variant</legend>
              <VariantGrid>
                {[1,2,3,4,5,6,7,8].map((n) => (
                  <React.Fragment key={n}>
                    <VarBtn $kind="s">S{n}</VarBtn>
                    <VarBtn $kind="r" $sel={n === 1}>R{n}</VarBtn>
                  </React.Fragment>
                ))}
              </VariantGrid>
            </VariantGroup>
          </Lower>
        </TabPage>
      </LeftPane>
      <RightPane>
        <TopBar>
          <BarLabel $w={52}>Ref angle</BarLabel>
          <Box $w={40}>20</Box>
          <BarLabel $ml={4} $w={47}>deg hor</BarLabel>
          <BarCheck />
          <BarLabel $w={50} $tight>SPL max</BarLabel>
          <Box $w={40} $dim>95</Box>
          <SmallBtn $w={20} $h={20} $ml={4}><IconUpDown /></SmallBtn>
          <SmallBtn $w={20} $h={20} $ml={1}><IconHour /></SmallBtn>
          <BarLabel $ml={10} $w={24}>Ovl</BarLabel>
          <SmallBtn $w={25} $h={20}><IconRound /></SmallBtn>
          <SmallBtn $w={26} $h={20} $ml={5}><IconRound minus /></SmallBtn>
          <BarLabel $w={5} />
          <Box $w={290} $left $fs={12.8}>FGS_II_komplex03_preiswert</Box>
          <BarLabel $ml={244} $w={0} />
          <Box $w={34}>20</Box>
          <BarLabel $ml={6} $w={14}>...</BarLabel>
          <Box $w={40}>20000</Box>
          <BarLabel $ml={6}>Hz</BarLabel>
        </TopBar>
        <GridWrap>
          <Chart id="spl" title="SPL" lu="dB" ru="deg" left={["95","90","85","80","75","70","65","60","55"]} right={["180","135","90","45","0","-45","-90","-135","-180"]} curves={splCurves} overlay={splLine} />
          <Chart id="gd" title="GD & Phase" lu="ms" ru="deg" left={["15","10","5","0","-5"]} right={["180","90","0","-90","-180"]} curves={gdCurves} />
          <Chart id="pow" title="Power & DI" lu="dB" ru="dB" left={["95","90","85","80","75","70","65","60","55"]} right={["35","30","25","20","15","10","5","0","-5"]} curves={powerCurves} />
          <Chart id="flt" title="Filter" lu="dB" ru="deg" left={["10","5","0","-5","-10","-15","-20","-25","-30","-35","-40"]} right={["180","144","108","72","36","0","-36","-72","-108","-144","-180"]} curves={filterCurves} />
          <Directivity />
          <Chart id="imp" title="Impedance" lu="ohm" ru="deg" left={["30","25","20","15","10","5","0"]} right={["180","120","60","0","-60","-120","-180"]} curves={impCurves} />
        </GridWrap>
      </RightPane>
    </Page>
  );
}
